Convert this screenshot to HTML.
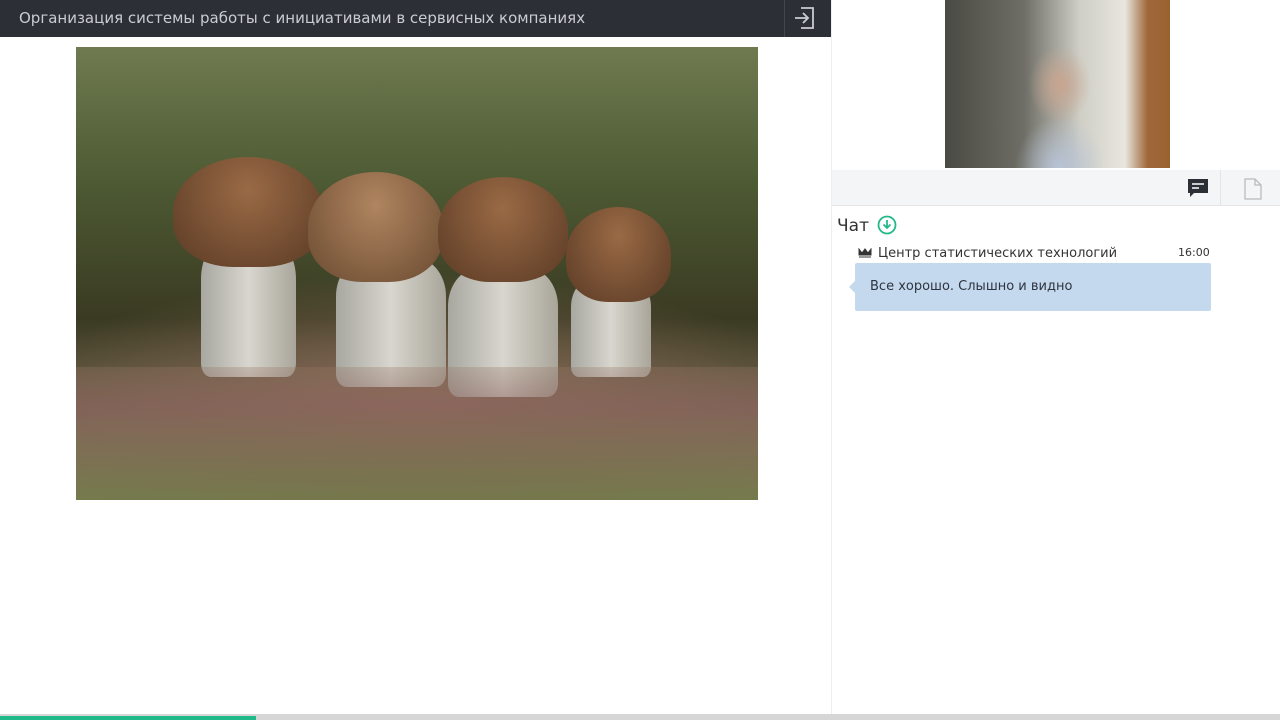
<!DOCTYPE html>
<html><head><meta charset="utf-8"><style>
body{margin:0;width:1280px;height:720px;position:relative;overflow:hidden;background:#fff;font-family:"DejaVu Sans","Liberation Sans",sans-serif}
.top{position:absolute;left:0;top:0;width:831px;height:37px;background:#2c2f35}
.top .t{position:absolute;left:19px;top:9px;color:#c9ccd2;font-size:15px}
.top .b{position:absolute;left:784px;top:0;width:47px;height:37px;border-left:1px solid #43474e}
.img{position:absolute;left:76px;top:47px;width:682px;height:453px;overflow:hidden;
background:radial-gradient(ellipse 60% 30% at 50% 80%,#8a6a58,transparent),linear-gradient(180deg,#6f7a50 0%,#4d5a33 30%,#3a3a22 60%,#7a6a55 85%,#8a8060 100%)}
.cap{position:absolute;border-radius:50% 50% 40% 40%;background:radial-gradient(ellipse at 50% 30%,#9a6a45,#5a3a25)}
.stem{position:absolute;background:linear-gradient(90deg,#a8a8a0,#d8d6ce,#a9a59a);border-radius:30% 30% 10% 10%}
.vline{position:absolute;left:831px;top:0;width:1px;height:720px;background:#eee}
.video{position:absolute;left:945px;top:0;width:225px;height:168px;background:linear-gradient(90deg,#4a4a44 0%,#6e6e66 35%,#cfcfc6 60%,#e8e6df 80%,#a0673a 90%,#9a6230 100%)}
.tabs{position:absolute;left:832px;top:170px;width:448px;height:35px;background:#f4f5f6;border-bottom:1px solid #e6e6e6}
.chat{position:absolute;left:837px;top:216px;font-size:17px;color:#333}
.name{position:absolute;left:878px;top:246px;font-size:13px;color:#333}
.time{position:absolute;left:1178px;top:246px;font-size:11px;color:#333}
.msg{position:absolute;left:855px;top:263px;width:356px;height:48px;background:#c5d9ee;border-radius:2px}
.msg span{position:absolute;left:15px;top:16px;font-size:13px;color:#2d3440}
.msg:before{content:"";position:absolute;left:-6px;top:18px;border:6px solid transparent;border-right-color:#c5d9ee;border-left:0}
.bar{position:absolute;left:0;top:714px;width:1280px;height:6px;background:#d6d6d6}
.bar i{position:absolute;left:0;top:2px;width:256px;height:4px;background:#22b98a}
</style></head><body>
<div class="top"><div class="t">Организация системы работы с инициативами в сервисных компаниях</div>
<div class="b"><svg width="47" height="37" viewBox="0 0 47 37"><path d="M16 8h12v20H16M10 18h12M18 13l5 5-5 5" fill="none" stroke="#c9ccd2" stroke-width="1.8"/></svg></div></div>
<div class="img">
<div class="stem" style="left:125px;top:190px;width:95px;height:140px"></div>
<div class="stem" style="left:260px;top:210px;width:110px;height:130px"></div>
<div class="stem" style="left:372px;top:220px;width:110px;height:130px"></div>
<div class="stem" style="left:495px;top:230px;width:80px;height:100px"></div>
<div class="cap" style="left:97px;top:110px;width:150px;height:110px"></div>
<div class="cap" style="left:232px;top:125px;width:135px;height:110px;background:radial-gradient(ellipse at 50% 30%,#b08560,#6a4a30)"></div>
<div class="cap" style="left:362px;top:130px;width:130px;height:105px"></div>
<div class="cap" style="left:490px;top:160px;width:105px;height:95px"></div>
<div style="position:absolute;left:0;top:320px;width:682px;height:133px;background:linear-gradient(180deg,rgba(150,120,100,.3),rgba(140,100,95,.6) 30%,rgba(110,120,70,.75))"></div>
</div>
<div class="vline"></div>
<div class="video"><div style="position:absolute;left:70px;top:40px;width:90px;height:128px;background:radial-gradient(ellipse 35% 30% at 50% 35%,#c9a590,transparent),radial-gradient(ellipse 50% 40% at 50% 100%,#b7c3d6,transparent);"></div></div>
<div class="tabs">
<svg style="position:absolute;left:355px;top:8px" width="22" height="22" viewBox="0 0 22 22"><path d="M1 1h20v14H7l-4 4v-4H1z" fill="#2c2f35"/><path d="M5 6h12M5 10h7" stroke="#fff" stroke-width="1.6"/></svg>
<div style="position:absolute;left:388px;top:0;width:1px;height:35px;background:#e4e4e4"></div>
<svg style="position:absolute;left:412px;top:8px" width="18" height="22" viewBox="0 0 18 22"><path d="M1 1h10l6 6v14H1z M11 1v6h6" fill="none" stroke="#bbb" stroke-width="1.3"/></svg>
</div>
<div class="chat">Чат</div>
<svg style="position:absolute;left:877px;top:215px" width="20" height="20" viewBox="0 0 20 20"><circle cx="10" cy="10" r="8.5" fill="none" stroke="#22b98a" stroke-width="1.8"/><path d="M10 5v8M6.5 9.5L10 13l3.5-3.5" fill="none" stroke="#22b98a" stroke-width="1.8"/></svg>
<svg style="position:absolute;left:858px;top:248px" width="14" height="10" viewBox="0 0 14 10"><path d="M1 1l3 4 3-4 3 4 3-4v6H1z M1 9h12" fill="#333" stroke="#333"/></svg>
<div class="name">Центр статистических технологий</div>
<div class="time">16:00</div>
<div class="msg"><span>Все хорошо. Слышно и видно</span></div>
<div class="bar"><i></i></div>
</body></html>
